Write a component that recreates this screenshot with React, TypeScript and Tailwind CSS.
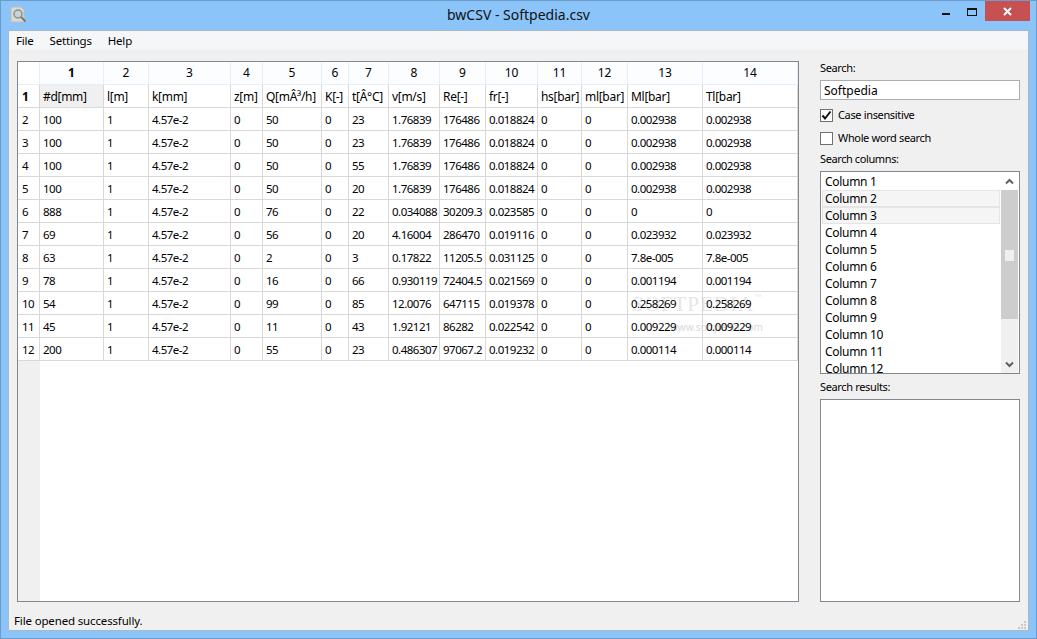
const colWidths = [22, 64, 45, 82, 32, 59, 27, 40, 51, 46, 52, 44, 46, 75, 95];
const headers = ["#d[mm]", "l[m]", "k[mm]", "z[m]", "Q[mÂ³/h]", "K[-]", "t[Â°C]", "v[m/s]", "Re[-]", "fr[-]", "hs[bar]", "ml[bar]", "Ml[bar]", "Tl[bar]"];
const rows = [
  ["100", "1", "4.57e-2", "0", "50", "0", "23", "1.76839", "176486", "0.018824", "0", "0", "0.002938", "0.002938"],
  ["100", "1", "4.57e-2", "0", "50", "0", "23", "1.76839", "176486", "0.018824", "0", "0", "0.002938", "0.002938"],
  ["100", "1", "4.57e-2", "0", "50", "0", "55", "1.76839", "176486", "0.018824", "0", "0", "0.002938", "0.002938"],
  ["100", "1", "4.57e-2", "0", "50", "0", "20", "1.76839", "176486", "0.018824", "0", "0", "0.002938", "0.002938"],
  ["888", "1", "4.57e-2", "0", "76", "0", "22", "0.034088", "30209.3", "0.023585", "0", "0", "0", "0"],
  ["69", "1", "4.57e-2", "0", "56", "0", "20", "4.16004", "286470", "0.019116", "0", "0", "0.023932", "0.023932"],
  ["63", "1", "4.57e-2", "0", "2", "0", "3", "0.17822", "11205.5", "0.031125", "0", "0", "7.8e-005", "7.8e-005"],
  ["78", "1", "4.57e-2", "0", "16", "0", "66", "0.930119", "72404.5", "0.021569", "0", "0", "0.001194", "0.001194"],
  ["54", "1", "4.57e-2", "0", "99", "0", "85", "12.0076", "647115", "0.019378", "0", "0", "0.258269", "0.258269"],
  ["45", "1", "4.57e-2", "0", "11", "0", "43", "1.92121", "86282", "0.022542", "0", "0", "0.009229", "0.009229"],
  ["200", "1", "4.57e-2", "0", "55", "0", "23", "0.486307", "97067.2", "0.019232", "0", "0", "0.000114", "0.000114"],
];
const columns = Array.from({ length: 12 }, (_, i) => `Column ${i + 1}`);

function DataTable() {
  return (
    <div className="relative min-w-0 flex-1 overflow-hidden border border-[#828790] bg-white">
      <div className="absolute bottom-0 left-0 top-[299px] w-[22px] bg-[#f0f0f0]" />
      {/* watermark sits under the table so the values stay readable */}
      <div className="pointer-events-none absolute left-[614px] top-[230px] whitespace-nowrap font-['Liberation_Serif',serif] text-[21px] leading-[24px] tracking-[1px] text-[#e6e6e6]">
        SOFTPEDIA<span className="align-top text-[7px] leading-[10px]">™</span>
      </div>
      <div className="pointer-events-none absolute left-[652px] top-[258px] text-[10px] leading-[14px] text-[#d8d8d8]">
        www.softpedia.com
      </div>
      <table className="relative w-[780px] table-fixed border-separate border-spacing-0">
        <colgroup>
          {colWidths.map((w, i) => (
            <col key={i} style={{ width: w }} />
          ))}
        </colgroup>
        <thead>
          <tr className="h-[23px]">
            <th className="border-b border-r border-[#e3effb] bg-white" />
            {headers.map((_, i) => (
              <th
                key={i}
                className={`border-b border-r border-[#e3effb] bg-[#fcfdff] p-0 text-center text-[12px] text-black ${i === 0 ? "font-bold" : "font-normal"}`}
              >
                {i + 1}
              </th>
            ))}
          </tr>
        </thead>
        <tbody>
          <tr className="h-[23px]">
            <td className="border-b border-r border-[#d8d8d8] pl-[4px] pt-px text-[12px] font-bold">1</td>
            {headers.map((h, i) => (
              <td
                key={h}
                className={`overflow-hidden whitespace-nowrap border-b border-r border-[#d8d8d8] pl-[3px] pt-px text-[12px] tracking-[-0.3px] ${i === 0 ? "bg-[#f0f0f0]" : ""}`}
              >
                {h}
              </td>
            ))}
          </tr>
          {rows.map((r, y) => (
            <tr key={y} className="h-[23px]">
              <td className="border-b border-r border-[#d8d8d8] pl-[4px] pt-px text-[11.5px] tracking-[-0.5px]">{y + 2}</td>
              {r.map((v, x) => (
                <td key={x} className="overflow-hidden whitespace-nowrap border-b border-r border-[#d8d8d8] pl-[3px] pt-px text-[11.5px] tracking-[-0.5px]">
                  {v}
                </td>
              ))}
            </tr>
          ))}
        </tbody>
      </table>
    </div>
  );
}

function Checkbox({ checked, label }: { checked?: boolean; label: string }) {
  return (
    <div className="flex h-[23px] items-center gap-[5px]">
      <span className="flex h-[13px] w-[13px] items-center justify-center border border-[#707070] bg-white">
        {checked && (
          <svg width="11" height="11" viewBox="0 0 11 11">
            <path d="M1.5 5.5 L4 8.5 L9.5 1.5" fill="none" stroke="#111" strokeWidth="2" />
          </svg>
        )}
      </span>
      <span className="pb-[2px] text-[11px] leading-none tracking-[-0.35px]">{label}</span>
    </div>
  );
}

function ColumnList() {
  return (
    <div className="mt-[4px] flex h-[203px] border border-[#828790] bg-white pl-px pr-px pt-px">
      <div className="min-w-0 flex-1 overflow-hidden pr-px">
        {columns.map((c, i) => (
          <div
            key={c}
            className={`h-[17px] whitespace-nowrap text-[12px] tracking-[-0.3px] ${
              i === 1 || i === 2
                ? "border border-[#e5e5e5] bg-[#f5f5f5] pl-[2px] leading-[15px]"
                : "pl-[3px] leading-[17px]"
            }`}
          >
            {c}
          </div>
        ))}
      </div>
      <div className="flex w-[17px] flex-col bg-[#f0f0f0]">
        <div className="flex h-[17px] items-center justify-center bg-white">
          <svg width="9" height="7" viewBox="0 0 9 7">
            <path d="M1 5.5 L4.5 2 L8 5.5" fill="none" stroke="#606060" strokeWidth="2" />
          </svg>
        </div>
        <div className="flex h-[129px] items-center justify-center bg-[#cdcdcd]">
          <div className="mt-[2px] h-[11px] w-[9px] bg-[#f0f0f0]" />
        </div>
        <div className="flex-1" />
        <div className="flex h-[17px] items-center justify-center">
          <svg width="9" height="7" viewBox="0 0 9 7">
            <path d="M1 1.5 L4.5 5 L8 1.5" fill="none" stroke="#606060" strokeWidth="2" />
          </svg>
        </div>
      </div>
    </div>
  );
}

function SidePanel() {
  return (
    <div className="flex w-[200px] shrink-0 flex-col">
      <div className="h-[19px] text-[11px] leading-[14px] tracking-[-0.35px]">Search:</div>
      <div className="flex h-[20px] items-center border border-[#abadb3] bg-white pl-[3px] pt-px text-[12px]">Softpedia</div>
      <div className="mt-[4px]">
        <Checkbox checked label="Case insensitive" />
        <Checkbox label="Whole word search" />
      </div>
      <div className="mt-px text-[11px] leading-[16px] tracking-[-0.4px]">Search columns:</div>
      <ColumnList />
      <div className="mt-[5px] h-[20px] text-[11px] leading-[16px] tracking-[-0.35px]">Search results:</div>
      <div className="min-h-0 flex-1 border border-[#828790] bg-white" />
    </div>
  );
}

function AppIcon() {
  return (
    <svg width="18" height="18" viewBox="0 0 18 18">
      <path d="M1 1 H11 L14 4 V16 H1 Z" fill="#d9d9d6" stroke="#bdbdb9" />
      <circle cx="8" cy="8" r="4" fill="#c6d5dc" stroke="#8d8d8d" strokeWidth="1.5" />
      <path d="M11 11 L15.5 15.5" stroke="#77787a" strokeWidth="2" />
    </svg>
  );
}

export default function App() {
  return (
    <div className="flex h-[639px] w-[1037px] flex-col overflow-hidden border border-[#6b9ccb] bg-[#8ac4f9] font-['Noto_Sans',sans-serif] text-black">
      <div className="relative flex h-[29px] shrink-0 items-start">
        <div className="ml-[9px] mt-[5px]">
          <AppIcon />
        </div>
        <div className="absolute left-0 right-0 top-[4px] text-center text-[14px] leading-[20px] text-[#111]">
          bwCSV - Softpedia.csv
        </div>
        <div className="ml-auto mr-[6px] flex items-start">
          <div className="flex h-[20px] w-[27px] items-center justify-center">
            <div className="mt-[5px] h-[2px] w-[8px] bg-[#111]" />
          </div>
          <div className="flex h-[20px] w-[26px] items-center justify-center">
            <div className="mt-px h-[8px] w-[10px] border border-t-[2px] border-[#111]" />
          </div>
          <div className="flex h-[20px] w-[45px] items-center justify-center bg-[#c75050]">
            <svg width="9" height="9" viewBox="0 0 9 9">
              <path d="M1 1 L8 8 M8 1 L1 8" stroke="#fff" strokeWidth="2" />
            </svg>
          </div>
        </div>
      </div>
      <div className="mx-[7px] mb-[7px] flex min-h-0 flex-1 flex-col border border-[#a9b7c6] bg-[#f0f0f0]">
        <div className="flex h-[20px] shrink-0 items-center gap-[16px] border-b border-[#eceded] bg-[#f5f6f7] pl-[7px] text-[11.5px] tracking-[-0.2px]">
          <span>File</span>
          <span>Settings</span>
          <span>Help</span>
        </div>
        <div className="flex min-h-0 flex-1 gap-[21px] pl-[8px] pr-[8px] pt-[10px]">
          <DataTable />
          <SidePanel />
        </div>
        <div className="relative flex h-[28px] shrink-0 items-center pl-[5px] pt-[10px] text-[11.5px] tracking-[-0.15px]">
          File opened successfully.
          <svg className="absolute bottom-[1px] right-[2px]" width="9" height="9" viewBox="0 0 9 9" fill="#c8c8c8">
            <rect x="7" y="1" width="2" height="2" />
            <rect x="4" y="4" width="2" height="2" />
            <rect x="7" y="4" width="2" height="2" />
            <rect x="1" y="7" width="2" height="2" />
            <rect x="4" y="7" width="2" height="2" />
            <rect x="7" y="7" width="2" height="2" />
          </svg>
        </div>
      </div>
    </div>
  );
}
